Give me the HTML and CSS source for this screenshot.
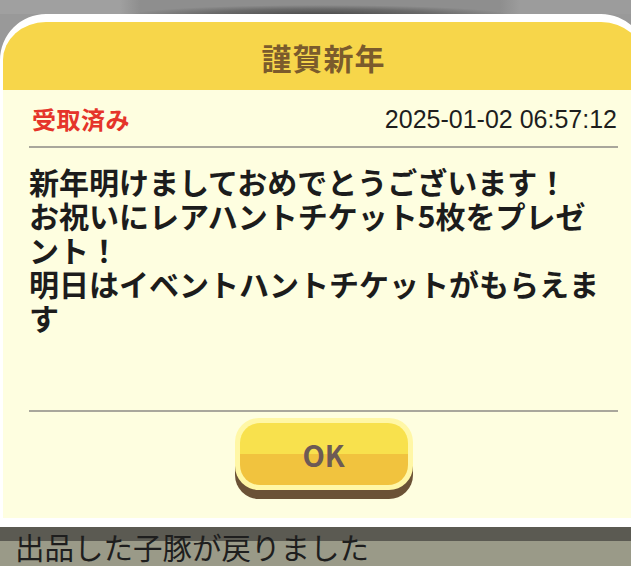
FILE: index.html
```html
<!DOCTYPE html>
<html lang="ja">
<head>
  <meta charset="UTF-8">
  <meta name="viewport" content="width=device-width, initial-scale=1.0">
  <title>謹賀新年</title>
  <link rel="stylesheet" href="styles.css">
</head>
<body>

<div class="backdrop"></div>

<div class="dialog">
  <div class="dialog-header">謹賀新年</div>
  <div class="dialog-body">
    <div class="meta">
      <span class="status">受取済み</span>
      <span class="date">2025-01-02 06:57:12</span>
    </div>
    <div class="rule"></div>
    <p class="message">新年明けましておめでとうございます！<br>お祝いにレアハントチケット5枚をプレゼント！<br>明日はイベントハントチケットがもらえます</p>
    <div class="rule"></div>
    <div class="actions">
      <button class="ok-btn"><span>OK</span></button>
    </div>
  </div>
</div>

<div class="toast">出品した子豚が戻りました</div>

</body>
</html>
```

FILE: styles.css
```css
html, body {
  margin: 0;
  padding: 0;
}
body {
  width: 631px;
  height: 566px;
  overflow: hidden;
  background-color: #999999;
  font-family: "Noto Sans CJK JP", "Noto Sans", sans-serif;
}
.backdrop {
  height: 14px;
  background:
    radial-gradient(ellipse 190px 10px at 320px 15px, #4a4a4a 0, #6a6a6a 60%, rgba(120, 120, 120, 0) 100%),
    linear-gradient(to right, #a0a0a0 0, #a0a0a0 120px, #8e8e8e 140px, #8e8e8e 500px, #9c9c9c 520px);
}
.dialog {
  width: 641px;
  border: 3px solid #ffffff;
  border-top-width: 8px;
  border-bottom-width: 9px;
  border-radius: 46px 46px 0 0;
  background-color: #fefee0;
  overflow: hidden;
}
.dialog-header {
  height: 68px;
  background-color: #f7d64a;
  color: #7b5b2c;
  font-size: 30px;
  font-weight: 700;
  letter-spacing: 1px;
  display: flex;
  align-items: center;
  justify-content: center;
  padding-top: 2px;
  box-sizing: border-box;
}
.dialog-body {
  padding: 0 26px;
  height: 428px;
}
.meta {
  display: flex;
  justify-content: space-between;
  align-items: center;
  height: 56px;
  padding: 0 1px 0 3px;
}
.status {
  color: #e5342a;
  font-size: 24px;
  font-weight: 700;
  letter-spacing: 0.5px;
}
.date {
  font-family: "Liberation Sans", Arial, sans-serif;
  font-size: 25px;
  color: #1e1e1e;
  margin-top: 2px;
}
.rule {
  height: 2px;
  background-color: #a9a79c;
}
.message {
  margin: 16px 0 0;
  width: 586px;
  height: 246px;
  font-size: 30px;
  line-height: 34px;
  font-weight: 700;
  color: #1c1c1c;
}
.actions {
  display: flex;
  justify-content: center;
  padding-top: 6px;
}
.ok-btn {
  width: 178px;
  height: 72px;
  padding: 5px;
  border: none;
  border-radius: 24px;
  background-color: #fff7a6;
  box-shadow: 0 9px 0 #6b5236;
  cursor: pointer;
}
.ok-btn span {
  display: flex;
  align-items: center;
  justify-content: center;
  height: 100%;
  border-radius: 20px;
  background: linear-gradient(#f8e14d 0, #f8e14d 50%, #f1c33e 50%, #f1c33e 100%);
  color: #6d5a55;
  font-family: "Noto Sans CJK JP", "Noto Sans", sans-serif;
  font-size: 29px;
  font-weight: 700;
}
.toast {
  height: 39px;
  padding-left: 15px;
  background: linear-gradient(#5b5a52 0, #5b5a52 14px, #9a9a88 14px);
  color: #1e1e1e;
  font-size: 29.5px;
  line-height: 38px;
}
```
